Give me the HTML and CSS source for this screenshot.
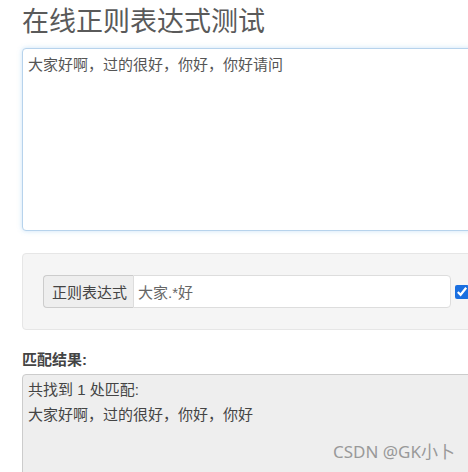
FILE: index.html
```html
<!DOCTYPE html>
<html lang="zh-CN">
<head>
    <meta charset="UTF-8">
    <meta name="viewport" content="width=device-width, initial-scale=1.0">
    <title>在线正则表达式测试</title>
    <link rel="stylesheet" href="styles.css">
</head>
<body>
    <div class="container">
        <h1 class="title">在线正则表达式测试</h1>
        <textarea class="source">大家好啊，过的很好，你好，你好请问</textarea>

        <div class="well">
            <div class="input-group">
                <span class="addon">正则表达式</span>
                <input class="regex" type="text" value="大家.*好">
            </div>
            <input class="flag" type="checkbox" checked>
        </div>

        <label class="result-label">匹配结果:</label>
        <div class="result">
            共找到 1 处匹配:<br>
            大家好啊，过的很好，你好，你好
        </div>
    </div>
    <div class="watermark">CSDN @GK小卜</div>
</body>
</html>
```

FILE: styles.css
```css
html, body {
    margin: 0;
    padding: 0;
    height: 100%;
    overflow: hidden;
    background: #fff;
}
body {
    font-family: "Liberation Sans", "Noto Sans CJK SC", sans-serif;
    font-size: 15px;
    color: #444;
}
.container {
    width: 520px;
    padding-left: 22px;
    display: flex;
    flex-direction: column;
}
.title {
    margin: 7px 0 0;
    font-size: 27px;
    line-height: 30px;
    font-weight: normal;
    color: #5a5a5a;
}
.source {
    margin-top: 11px;
    height: 183px;
    box-sizing: border-box;
    padding: 6px 5px;
    font: inherit;
    font-size: 15px;
    line-height: 20px;
    color: #555;
    border: 1px solid #b7d3ec;
    border-radius: 4px;
    box-shadow: 0 0 5px rgba(102, 175, 233, 0.35);
    resize: none;
    outline: none;
}
.well {
    margin-top: 22px;
    height: 77px;
    box-sizing: border-box;
    padding: 20px;
    display: flex;
    align-items: center;
    gap: 4px;
    background: #f5f5f5;
    border: 1px solid #e6e6e6;
    border-radius: 4px;
}
.input-group {
    display: flex;
    width: 408px;
    height: 33px;
}
.addon {
    display: flex;
    align-items: center;
    padding: 0 6px 0 8px;
    background: #eee;
    border: 1px solid #ccc;
    border-right: none;
    border-radius: 4px 0 0 4px;
    color: #444;
}
.regex {
    flex: 1;
    min-width: 0;
    margin: 0;
    padding: 0 4px;
    font: inherit;
    font-size: 15px;
    color: #666;
    border: 1px solid #ddd;
    border-radius: 0 4px 4px 0;
    outline: none;
}
.flag {
    width: 14px;
    height: 14px;
    margin: 0;
    accent-color: #1a6fe0;
}
.result-label {
    margin-top: 20px;
    font-weight: bold;
    line-height: 20px;
    color: #444;
}
.result {
    margin-top: 4px;
    height: 140px;
    padding: 2px 5px;
    line-height: 25px;
    background: #eee;
    border: 1px solid #ccc;
    border-radius: 4px;
    color: #444;
}
.watermark {
    position: absolute;
    right: 13px;
    bottom: 9px;
    font-family: "Noto Sans", "Noto Sans CJK SC", sans-serif;
    font-size: 17px;
    color: #999;
}
```
